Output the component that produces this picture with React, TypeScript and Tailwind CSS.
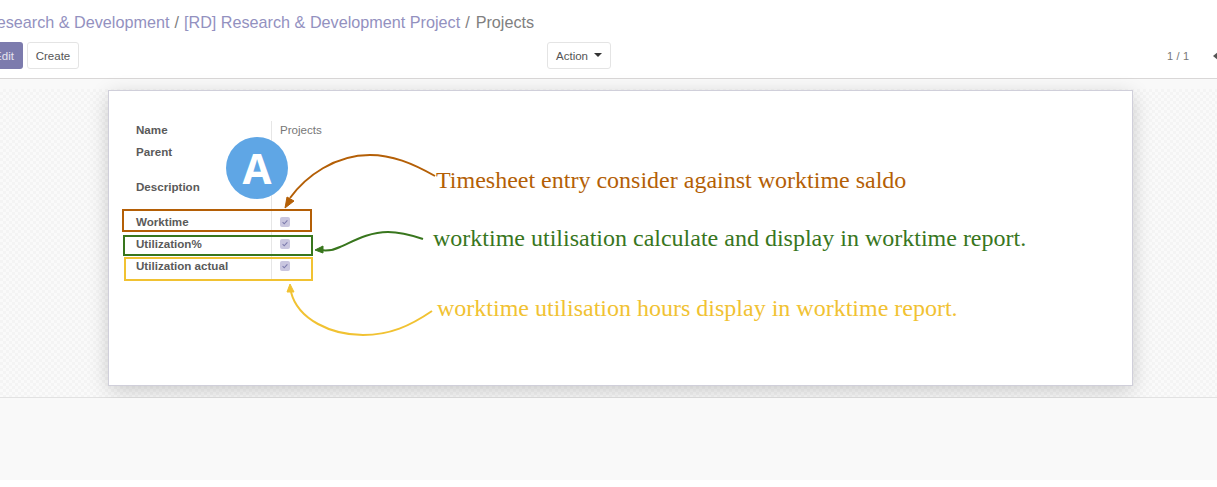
import React from "react";

const rows = [
  { label: "Name", value: "Projects", h: "h-[22px]" },
  { label: "Parent", h: "h-[35px]" },
  { label: "Description", h: "h-[35px]" },
  { label: "Worktime", check: true, h: "h-[22px]" },
  { label: "Utilization%", check: true, h: "h-[22px]" },
  { label: "Utilization actual", check: true, h: "h-[22px]" },
];

const Check = () => (
  <span className="flex h-[10px] w-[10px] items-center justify-center rounded-[2px] bg-[#c9c6df]">
    <svg width="8" height="8" viewBox="0 0 8 8" fill="none">
      <path d="M1.6 4.2 3.2 5.8 6.4 2.4" stroke="#7c7bad" strokeWidth="1.1" />
    </svg>
  </span>
);

const App: React.FC = () => {
  return (
    <div className="relative h-[487px] w-[1217px] overflow-hidden bg-white font-['Liberation_Sans',sans-serif]">
      {/* control panel */}
      <div className="h-[79px] border-b border-[#d9d7d7] bg-white">
        <div className="ml-[-15px] flex h-[42px] items-end whitespace-nowrap pb-[11px] text-[16.2px] leading-[18px] text-[#9391bf]">
          <span>Research &amp; Development</span>
          <span className="mx-[5px] text-[#808080]">/</span>
          <span>[RD] Research &amp; Development Project</span>
          <span className="ml-[5px] mr-[6px] text-[#808080]">/</span>
          <span className="text-[#808080]">Projects</span>
        </div>
        <div className="flex h-[27px] items-center text-[11.5px]">
          <div className="ml-[-14px] flex w-[561px] shrink-0 gap-[4px]">
            <button className="h-[27px] w-[37px] rounded-[3px] bg-[#7c7bad] pr-[1px] pt-[2px] text-[#e6e5f0]">Edit</button>
            <button className="h-[27px] w-[52px] rounded-[3px] border border-[#e4e4e4] bg-white pt-[2px] text-[#555]">Create</button>
          </div>
          <button className="flex h-[27px] w-[64px] shrink-0 items-center justify-center gap-[6px] rounded-[3px] border border-[#e4e4e4] bg-white pt-[2px] text-[#555]">
            Action
            <span className="mb-[3px] h-0 w-0 border-x-[4px] border-t-[4px] border-x-transparent border-t-[#333]" />
          </button>
          <span className="ml-[556px] w-[46px] shrink-0 pt-[2px] text-[11px] tracking-[0.2px] text-[#777]">1 / 1</span>
          <span className="h-0 w-0 shrink-0 border-y-[4px] border-r-[5px] border-y-transparent border-r-[#555]" />
        </div>
      </div>

      {/* sheet area */}
      <div className="h-[10px] bg-[#f9f9f9]" />
      <div className="h-[309px] border-b border-[#e2e2e2] bg-[#f7f7f7] bg-[repeating-conic-gradient(#f4f4f4_0_25%,#fafafa_0_50%)] bg-[length:6px_6px] pt-[1px]">
        <div className="ml-[108px] h-[296px] w-[1025px] border border-[#d0cfda] bg-white pl-[27px] pt-[30px] shadow-[0_5px_20px_-1px_rgba(0,0,0,0.2)]">
          <div className="w-[200px] text-[11.6px] leading-[18px]">
            {rows.map((r) => (
              <div key={r.label} className={`flex ${r.h}`}>
                <div className="w-[135px] font-bold text-[#5a5a5a]">{r.label}</div>
                <div className="flex h-full items-start border-l border-[#e6e6e6] pl-[8px] text-[#777]">
                  {r.check ? (
                    <span className="mt-[4px]">
                      <Check />
                    </span>
                  ) : (
                    r.value
                  )}
                </div>
              </div>
            ))}
          </div>
        </div>
      </div>
      <div className="h-[82px] bg-[#f9f9f9]" />

      {/* annotations on top of the screenshot */}
      <svg className="absolute left-0 top-0" width="1217" height="487" fill="none">
        <rect x="123" y="210" width="188" height="21" stroke="#b45f06" strokeWidth="2" />
        <rect x="124" y="236" width="188" height="19" stroke="#38761d" strokeWidth="2" />
        <rect x="125" y="258" width="187" height="22" stroke="#f1c232" strokeWidth="2" />
        <path d="M435 176C412 163 392 155 370 155 335 155 306 176 290 198" stroke="#b45f06" strokeWidth="2" />
        <path d="M285 208 287 197 294 201Z" fill="#b45f06" stroke="#b45f06" />
        <path d="M423 239C408 234 398 232 388 232 368 232 352 242 340 247 332 251 326 251 320 250" stroke="#38761d" strokeWidth="2" />
        <path d="M315 250 323 246 323 253Z" fill="#38761d" stroke="#38761d" />
        <path d="M432 311C410 326 390 335 363 335 332 335 298 320 291 292" stroke="#f1c232" strokeWidth="2" />
        <path d="M290 284 294 292 287 292Z" fill="#f1c232" stroke="#f1c232" />
      </svg>

      <div className="absolute left-[226px] top-[137px] flex h-[62px] w-[62px] items-center justify-center rounded-full bg-[#5fa6e5] font-['Open_Sans',sans-serif] text-[42px] font-bold leading-none text-white">
        A
      </div>

      <span className="absolute left-[436px] top-[166px] whitespace-nowrap font-['Liberation_Serif',serif] text-[24px] leading-[28px] text-[#b45f06]">
        Timesheet entry consider against worktime saldo
      </span>
      <span className="absolute left-[433px] top-[224px] whitespace-nowrap font-['Liberation_Serif',serif] text-[24px] leading-[28px] text-[#38761d]">
        worktime utilisation calculate and display in worktime report.
      </span>
      <span className="absolute left-[437px] top-[294px] whitespace-nowrap font-['Liberation_Serif',serif] text-[24px] leading-[28px] text-[#f1c232]">
        worktime utilisation hours display in worktime report.
      </span>
    </div>
  );
};

export default App;
